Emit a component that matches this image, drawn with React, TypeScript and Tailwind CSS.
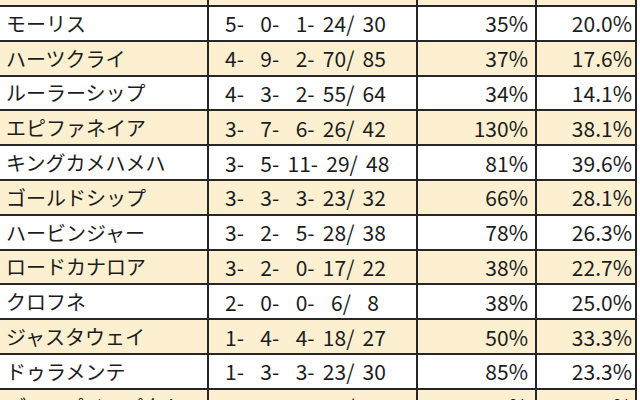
const rows: [string, string, string, string][] = [
  ["モーリス", "5-  0-  1- 24/ 30", "35%", "20.0%"],
  ["ハーツクライ", "4-  9-  2- 70/ 85", "37%", "17.6%"],
  ["ルーラーシップ", "4-  3-  2- 55/ 64", "34%", "14.1%"],
  ["エピファネイア", "3-  7-  6- 26/ 42", "130%", "38.1%"],
  ["キングカメハメハ", "3-  5- 11- 29/ 48", "81%", "39.6%"],
  ["ゴールドシップ", "3-  3-  3- 23/ 32", "66%", "28.1%"],
  ["ハービンジャー", "3-  2-  5- 28/ 38", "78%", "26.3%"],
  ["ロードカナロア", "3-  2-  0- 17/ 22", "38%", "22.7%"],
  ["クロフネ", "2-  0-  0-  6/  8", "38%", "25.0%"],
  ["ジャスタウェイ", "1-  4-  4- 18/ 27", "50%", "33.3%"],
  ["ドゥラメンテ", "1-  3-  3- 23/ 30", "85%", "23.3%"],
  ["ディープインパクト", "1-  2-  1- 15/ 19", "60%", "21.1%"],
];

function Row({
  cells,
  cream,
  header,
}: {
  cells: [string, string, string, string];
  cream: boolean;
  header?: boolean;
}) {
  const bg = cream ? "bg-[#fdf0d0]" : "bg-white";
  return (
    <div
      className={`grid grid-cols-[209px_209px_119px_100px] border-b-2 border-[#262626] ${bg} ${
        header ? "h-[7px]" : "h-[34.8px]"
      } shrink-0`}
    >
      <div className="border-r-2 border-[#262626] pl-[6px] pt-[1px] flex items-center whitespace-nowrap overflow-hidden text-[20px]">
        {cells[0]}
      </div>
      <div className="border-r-2 border-[#262626] pl-[16px] pt-[1px] flex items-center whitespace-pre overflow-hidden text-[21px] [word-spacing:3.5px]">
        {cells[1]}
      </div>
      <div className="border-r-2 border-[#262626] pr-[7px] pt-[1px] flex items-center justify-end overflow-hidden text-[21px]">
        {cells[2]}
      </div>
      <div className="border-r-2 border-[#262626] pr-[3px] pt-[1px] flex items-center justify-end overflow-hidden text-[21px]">
        {cells[3]}
      </div>
    </div>
  );
}

export default function App() {
  return (
    <div className="w-[640px] h-[400px] overflow-hidden bg-white text-[#1c1c1c] leading-none font-['Noto_Sans_CJK_JP','Noto_Sans',sans-serif]">
      <div className="flex flex-col w-[637px]">
        <Row cells={["", "", "", ""]} cream header />
        {rows.map((r, i) => (
          <Row key={r[0]} cells={r} cream={i % 2 === 1} />
        ))}
      </div>
    </div>
  );
}
